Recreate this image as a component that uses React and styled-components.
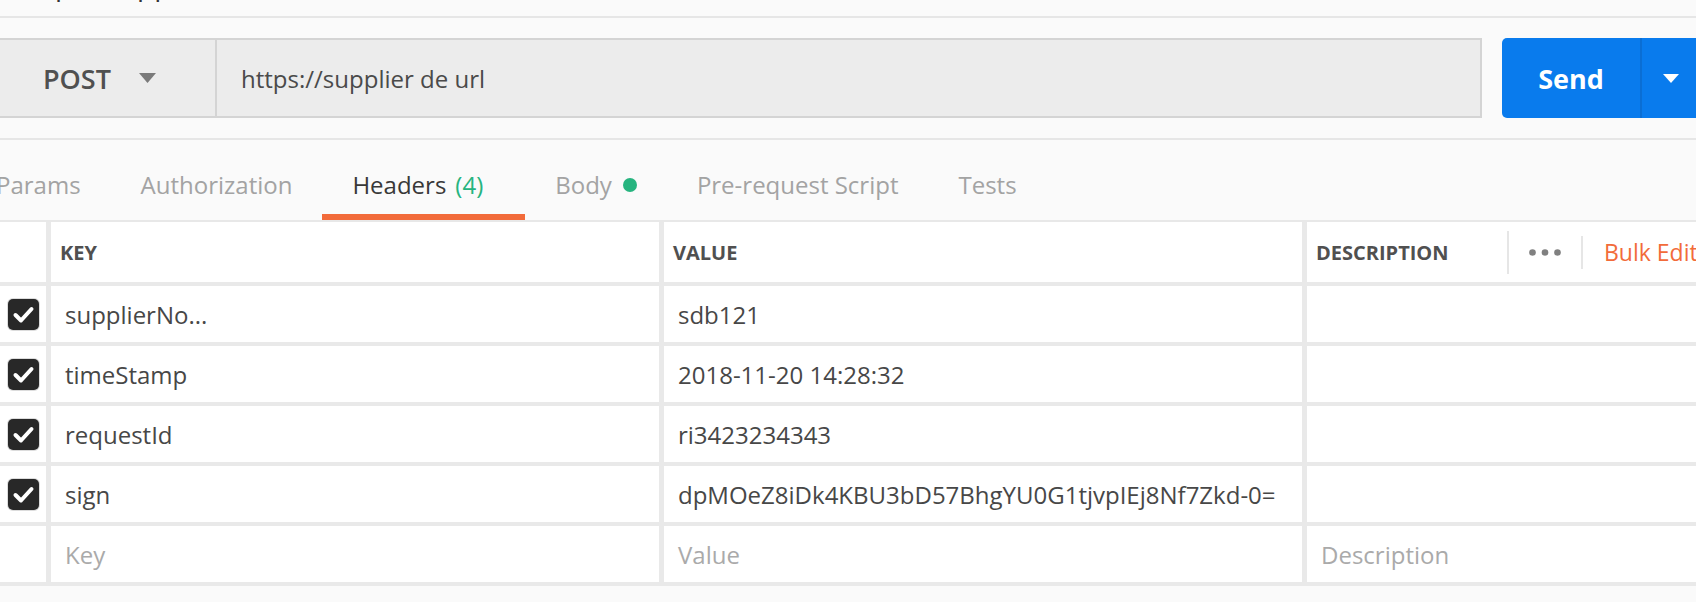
import React from 'react';
import styled, { createGlobalStyle } from 'styled-components';

const GlobalStyle = createGlobalStyle`
  html, body {
    margin: 0;
    padding: 0;
    background: #fafafa;
    overflow: hidden;
  }
  body {
    font-family: "Open Sans", "Liberation Sans", sans-serif;
    color: #4a4a4a;
  }
`;

const Page = styled.div`
  width: 1696px;
  height: 602px;
  background: #fafafa;
  overflow: hidden;
`;

const TitleBar = styled.div`
  height: 16px;
  overflow: hidden;
  border-bottom: 2px solid #e6e6e6;
`;

const TitleText = styled.div`
  margin-top: -30px;
  padding-left: 30px;
  font-size: 28px;
  line-height: 28px;
  color: #333;
  white-space: nowrap;
`;

const RequestRow = styled.div`
  display: flex;
  height: 80px;
  margin-top: 20px;
`;

const UrlGroup = styled.div`
  flex: 1;
  display: flex;
  background: #ececec;
  border: 2px solid #d4d4d4;
  border-left: none;
`;

const MethodSelect = styled.div`
  width: 217px;
  display: flex;
  align-items: center;
  padding-left: 43px;
  box-sizing: border-box;
  border-right: 2px solid #d4d4d4;
  font-size: 27px;
  font-weight: 600;
  color: #505050;
`;

const Caret = styled.svg`
  margin-left: 28px;
  flex: none;
`;

const UrlText = styled.div`
  display: flex;
  align-items: center;
  padding-left: 24px;
  font-size: 24px;
  color: #4a4a4a;
`;

const SendGroup = styled.div`
  flex: none;
  width: 194px;
  margin-left: 20px;
  display: flex;
  background: #097bed;
  border-radius: 5px 0 0 5px;
  color: #fff;
`;

const SendLabel = styled.div`
  width: 138px;
  display: flex;
  align-items: center;
  justify-content: center;
  font-size: 27px;
  font-weight: 700;
  border-right: 2px solid #0a6ed4;
`;

const SendArrow = styled.div`
  flex: 1;
  display: flex;
  align-items: center;
  padding-left: 21px;
`;

const TabBar = styled.div`
  margin-top: 20px;
  border-top: 2px solid #e6e6e6;
  border-bottom: 2px solid #e8e8e8;
  display: flex;
`;

const TabList = styled.div`
  display: flex;
  margin-left: -34px;
`;

const Tab = styled.div`
  display: flex;
  align-items: center;
  padding: 28px ${p => (p.$extra ? 42 : 30)}px 13px 30px;
  line-height: 33px;
  font-size: 24px;
  white-space: nowrap;
  color: ${p => (p.$active ? '#383838' : '#a3a3a3')};
  border-bottom: 6px solid ${p => (p.$active ? '#f26b3a' : 'transparent')};
`;

const Count = styled.span`
  color: #26b47f;
  margin-left: 9px;
`;

const Dot = styled.span`
  width: 14px;
  height: 14px;
  border-radius: 50%;
  background: #26b47f;
  margin-left: 11px;
`;

const Table = styled.div`
  display: grid;
  grid-template-columns: 46px 608px 638px 1fr;
  grid-auto-rows: 56px;
  grid-template-rows: 60px;
  column-gap: 5px;
  row-gap: 4px;
  padding-bottom: 4px;
  background: #e9e9e9;
`;

const Cell = styled.div`
  background: #fff;
  display: flex;
  align-items: center;
  min-width: 0;
  overflow: hidden;
  white-space: nowrap;
  padding: 0 ${p => (p.$head ? 9 : 14)}px;
  font-size: ${p => (p.$head ? 20 : 24)}px;
  font-weight: ${p => (p.$head ? 700 : 400)};
  color: ${p => (p.$placeholder ? '#aaaaaa' : p.$head ? '#505050' : '#474747')};
`;

const CheckCell = styled.div`
  background: #fff;
  display: flex;
  align-items: center;
  padding-left: 8px;
`;

const Checkbox = styled.div`
  width: 31px;
  height: 31px;
  border-radius: 5px;
  background: #282828;
  box-shadow: 0 0 0 1px #dcdcdc;
  display: flex;
  align-items: center;
  justify-content: center;
`;

const DescTitle = styled.span`
  width: 191px;
  flex: none;
`;

const Divider = styled.span`
  width: 2px;
  height: ${p => p.$h}px;
  background: #e6e6e6;
  flex: none;
`;

const Dots = styled.svg`
  margin: 0 20px;
  flex: none;
`;

const BulkEdit = styled.span`
  margin-left: 21px;
  font-size: 23px;
  font-weight: 400;
  color: #f26b3a;
`;

const rows = [
  ['supplierNo...', 'sdb121'],
  ['timeStamp', '2018-11-20 14:28:32'],
  ['requestId', 'ri3423234343'],
  ['sign', 'dpMOeZ8iDk4KBU3bD57BhgYU0G1tjvpIEj8Nf7Zkd-0='],
];

const Check = () => (
  <Checkbox>
    <svg width="31" height="31" viewBox="0 0 31 31">
      <path d="M7.5 16l5.5 5.5L23.5 10" fill="none" stroke="#fff" strokeWidth="4" strokeLinecap="round" strokeLinejoin="round" />
    </svg>
  </Checkbox>
);

export default function App() {
  return (
    <Page>
      <GlobalStyle />
      <TitleBar>
        <TitleText>Input supplier</TitleText>
      </TitleBar>

      <RequestRow>
        <UrlGroup>
          <MethodSelect>
            POST
            <Caret width="17" height="10" viewBox="0 0 17 10">
              <path d="M0 0h17L8.5 10z" fill="#7a7a7a" />
            </Caret>
          </MethodSelect>
          <UrlText>https://supplier de url</UrlText>
        </UrlGroup>
        <SendGroup>
          <SendLabel>Send</SendLabel>
          <SendArrow>
            <svg width="16" height="9" viewBox="0 0 16 9">
              <path d="M0 0h16L8 9z" fill="#fff" />
            </svg>
          </SendArrow>
        </SendGroup>
      </RequestRow>

      <TabBar>
        <TabList>
          <Tab>Params</Tab>
          <Tab>Authorization</Tab>
          <Tab $active $extra>Headers<Count>(4)</Count></Tab>
          <Tab>Body<Dot /></Tab>
          <Tab>Pre-request Script</Tab>
          <Tab>Tests</Tab>
        </TabList>
      </TabBar>

      <Table>
        <CheckCell />
        <Cell $head>KEY</Cell>
        <Cell $head>VALUE</Cell>
        <Cell $head>
          <DescTitle>DESCRIPTION</DescTitle>
          <Divider $h={43} />
          <Dots width="32" height="7" viewBox="0 0 32 7">
            <circle cx="3.5" cy="3.5" r="3.3" fill="#808080" />
            <circle cx="16" cy="3.5" r="3.3" fill="#808080" />
            <circle cx="28.5" cy="3.5" r="3.3" fill="#808080" />
          </Dots>
          <Divider $h={33} />
          <BulkEdit>Bulk Edit</BulkEdit>
        </Cell>

        {rows.map(([k, v]) => (
          <React.Fragment key={k}>
            <CheckCell><Check /></CheckCell>
            <Cell>{k}</Cell>
            <Cell>{v}</Cell>
            <Cell />
          </React.Fragment>
        ))}

        <CheckCell />
        <Cell $placeholder>Key</Cell>
        <Cell $placeholder>Value</Cell>
        <Cell $placeholder>Description</Cell>
      </Table>
    </Page>
  );
}
